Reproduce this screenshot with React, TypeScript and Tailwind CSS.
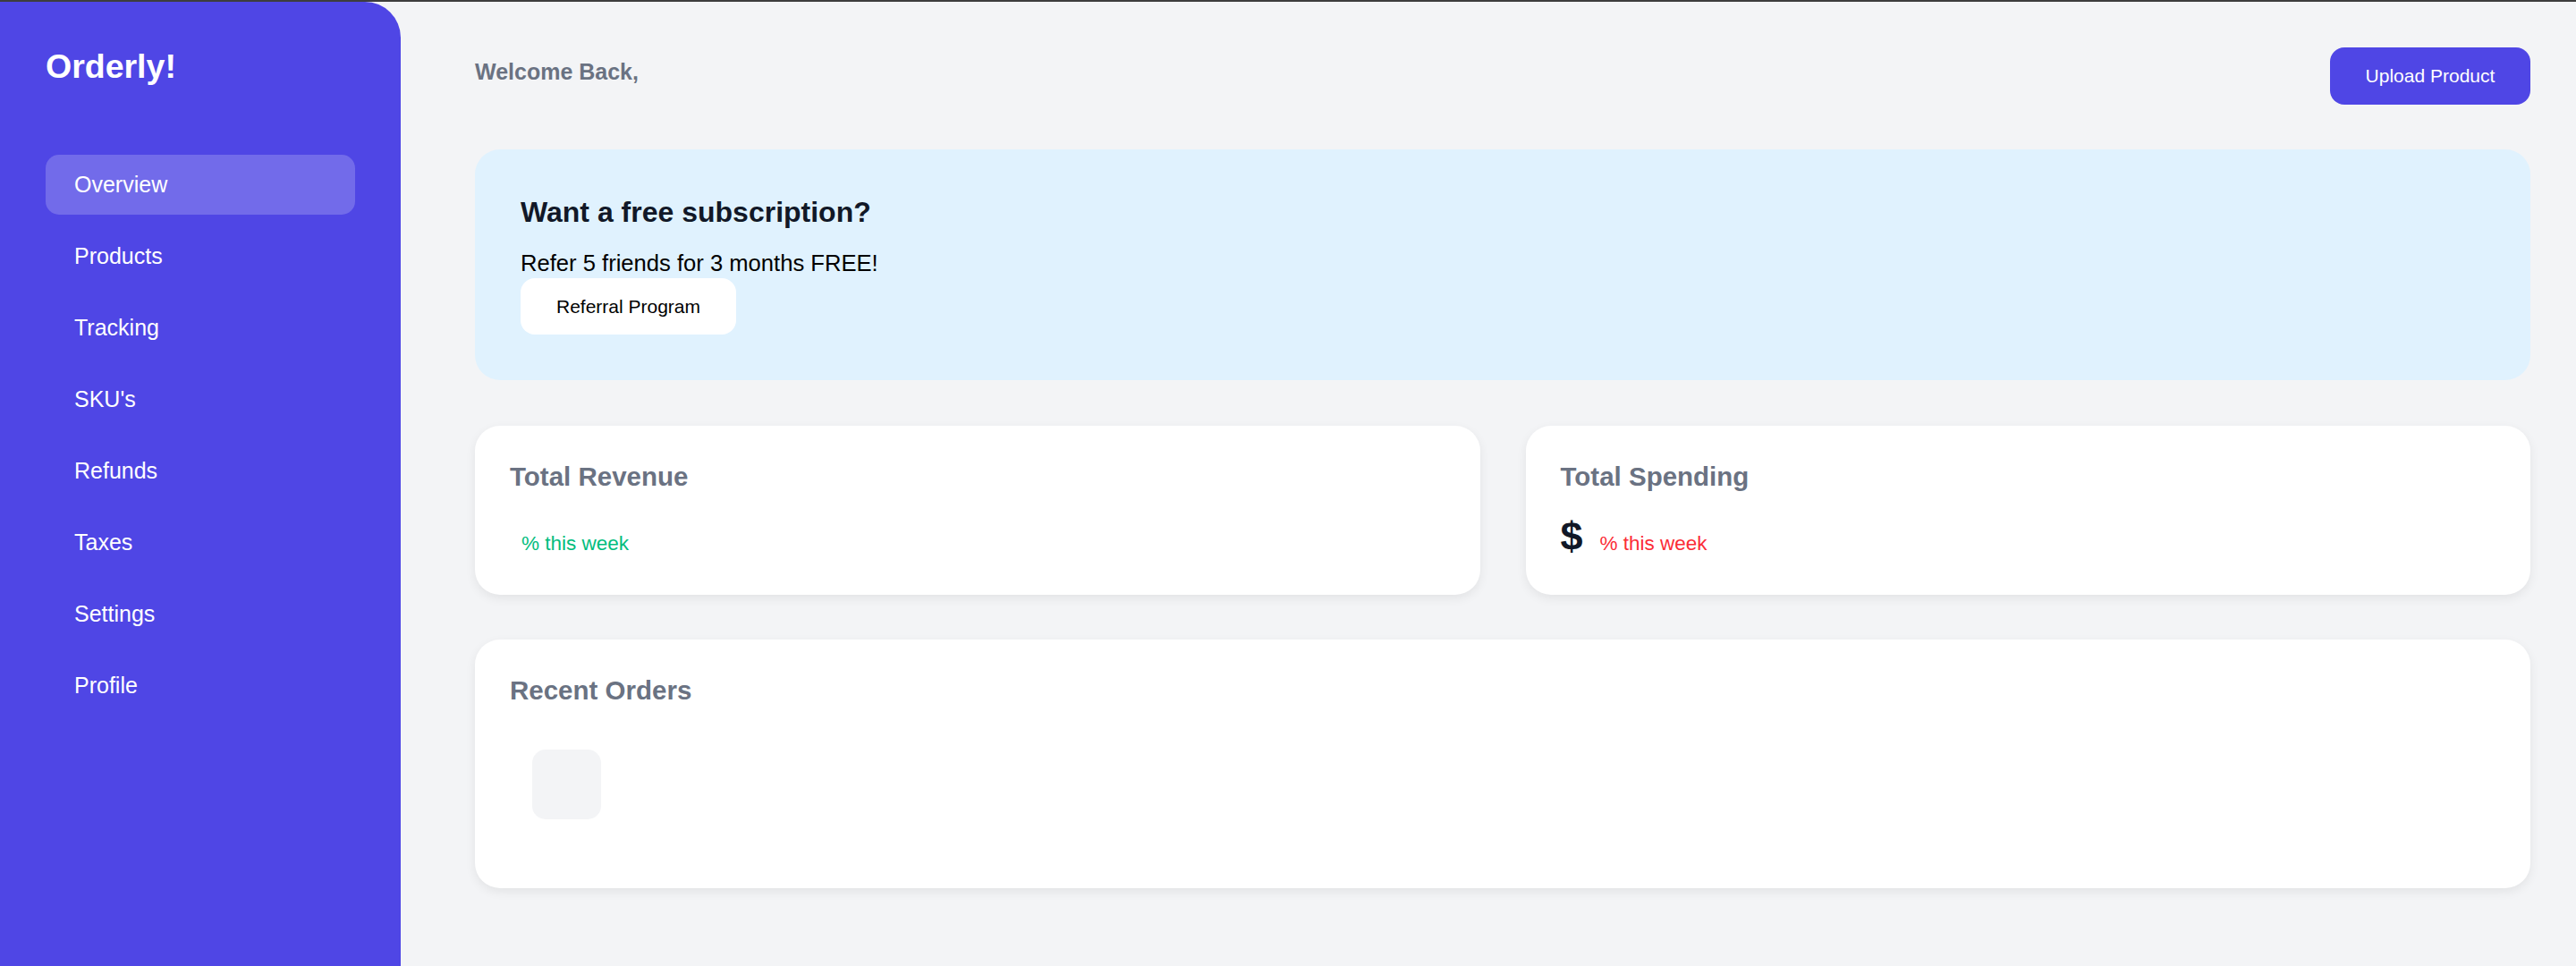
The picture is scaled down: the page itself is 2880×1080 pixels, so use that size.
import React from "react";

const navItems = ["Overview", "Products", "Tracking", "SKU's", "Refunds", "Taxes", "Settings", "Profile"];

function StatCard({
  title,
  value,
  pctClass,
  gapClass,
}: {
  title: string;
  value: string;
  pctClass: string;
  gapClass: string;
}) {
  return (
    <div className="bg-white rounded-[28px] p-[39px] shadow-[0_4px_12px_rgba(0,0,0,0.07)]">
      <h3 className="text-[29.5px] leading-[36px] font-bold text-gray-500">{title}</h3>
      <div className="mt-[23px] h-[52px] text-[45px] leading-[52px] font-bold text-[#111827] whitespace-pre">
        <span>{value}</span>
        <span className={`text-[22.5px] leading-none font-normal ${gapClass} ${pctClass}`}>% this week</span>
      </div>
    </div>
  );
}

export default function App() {
  return (
    <div className="flex flex-col h-screen font-['Liberation_Sans',Arial,Helvetica,sans-serif]">
      <div className="h-[2px] bg-[#3d3d3d] shrink-0" />
      <div className="flex flex-1 bg-gray-100 min-h-0">
        <aside className="w-[448px] shrink-0 bg-[#4f46e5] rounded-tr-[40px] px-[51px] pt-[50px]">
          <h1 className="text-[37.5px] leading-[45px] font-bold text-white">Orderly!</h1>
          <nav className="mt-[76px] flex flex-col gap-[13px]">
            {navItems.map((item, i) => (
              <div
                key={item}
                className={
                  i === 0
                    ? "h-[67px] flex items-center pl-[32px] rounded-[15px] text-[25px] text-white bg-white/20"
                    : "h-[67px] flex items-center pl-[32px] rounded-[15px] text-[25px] text-white"
                }
              >
                {item}
              </div>
            ))}
          </nav>
        </aside>
        <main className="flex-1 pl-[83px] pr-[51px] pt-[51px]">
          <div className="flex justify-between items-start">
            <h2 className="pt-[9px] text-[25px] leading-[37px] font-bold text-gray-500">Welcome Back,</h2>
            <button className="h-[64px] w-[224px] rounded-[16px] bg-[#4f46e5] text-white text-[21px]">
              Upload Product
            </button>
          </div>

          <section className="mt-[50px] bg-[#e0f2fe] rounded-[28px] px-[51px] pt-[50px] pb-[51px]">
            <h3 className="text-[32px] leading-[40px] font-bold text-[#111827]">Want a free subscription?</h3>
            <p className="mt-[21px] text-[25.6px] leading-[33px] text-black">Refer 5 friends for 3 months FREE!</p>
            <button className="h-[63px] w-[241px] rounded-[16px] bg-white text-black text-[21px]">
              Referral Program
            </button>
          </section>

          <div className="mt-[51px] grid grid-cols-2 gap-[51px]">
            <StatCard title="Total Revenue" value="" pctClass="text-emerald-500" gapClass="ml-[13px]" />
            <StatCard title="Total Spending" value="$" pctClass="text-red-500" gapClass="ml-[19px]" />
          </div>

          <section className="mt-[50px] bg-white rounded-[28px] p-[39px] shadow-[0_4px_12px_rgba(0,0,0,0.07)]">
            <h3 className="text-[29.5px] leading-[36px] font-bold text-gray-500">Recent Orders</h3>
            <div className="pl-[25px] pt-[48px] pb-[38px]">
              <div className="w-[77px] h-[78px] rounded-[15px] bg-gray-100" />
            </div>
          </section>
        </main>
      </div>
    </div>
  );
}
